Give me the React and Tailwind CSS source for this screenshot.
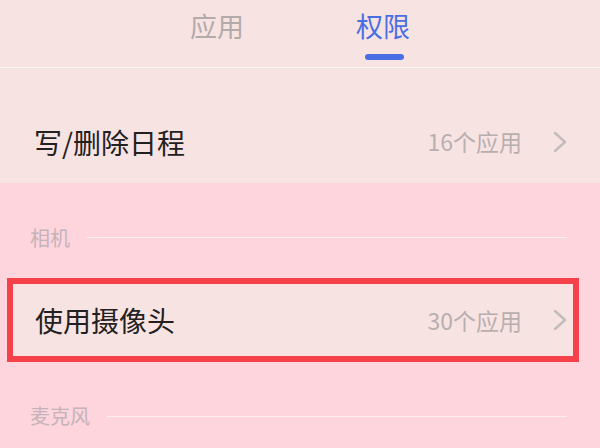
import React from 'react';

const Chevron = () => (
  <svg width="14" height="22" viewBox="0 0 14 22" fill="none" className="shrink-0">
    <polyline points="2,2 12,11 2,20" stroke="#c3bcbc" strokeWidth="2.4" strokeLinecap="round" strokeLinejoin="round" />
  </svg>
);

const SectionLabel = ({ label }) => (
  <div className="flex items-center pl-[30px] pr-[33px] gap-[17px]">
    <span className="text-[20px] leading-none text-[#c4b3b8]">{label}</span>
    <div className="flex-1 h-px bg-[#fbeff1]" />
  </div>
);

const App = () => {
  return (
    <div
      className="w-[600px] h-[448px] overflow-hidden flex flex-col bg-[#fed5dd]"
      style={{ fontFamily: '"Noto Sans CJK SC", "Noto Sans", sans-serif' }}
    >
      {/* tabs */}
      <div className="h-[68px] shrink-0 bg-[#f8e3e3] border-b border-[#fdf5f5] flex">
        <div className="flex-1 flex justify-end pr-[57px] pt-[6px]">
          <span className="text-[27px] leading-[40px] text-[#b3aaaa]">应用</span>
        </div>
        <div className="flex-1 flex flex-col items-start pl-[55px] pt-[6px]">
          <span className="text-[27px] leading-[40px] text-[#4a6fe4]">权限</span>
          <div className="mt-[8px] ml-[9px] w-[39px] h-[6px] rounded-full bg-[#4a6fe4]" />
        </div>
      </div>

      {/* calendar row */}
      <div className="h-[115px] shrink-0 bg-[#f8e3e3] flex items-end">
        <div className="h-[83px] w-full flex items-center pl-[34px] pr-[33px]">
          <span className="flex-1 text-[28px] text-[#222020]">写/删除日程</span>
          <span className="text-[23px] text-[#b7afaf] mr-[31px]">16个应用</span>
          <Chevron />
        </div>
      </div>

      {/* camera */}
      <div className="h-[95px] shrink-0 flex flex-col justify-center pt-[14px]">
        <SectionLabel label="相机" />
      </div>
      <div className="ml-[7px] w-[572px] h-[84px] shrink-0 border-[6px] border-[#f5414a] bg-[#f8e3e3] flex items-center pl-[22px] pr-[6px]">
        <span className="flex-1 text-[28px] text-[#222020]">使用摄像头</span>
        <span className="text-[23px] text-[#b7afaf] mr-[31px]">30个应用</span>
        <Chevron />
      </div>

      {/* microphone */}
      <div className="h-[86px] shrink-0 flex flex-col justify-center pt-[22px]">
        <SectionLabel label="麦克风" />
      </div>
    </div>
  );
};

export default App;
